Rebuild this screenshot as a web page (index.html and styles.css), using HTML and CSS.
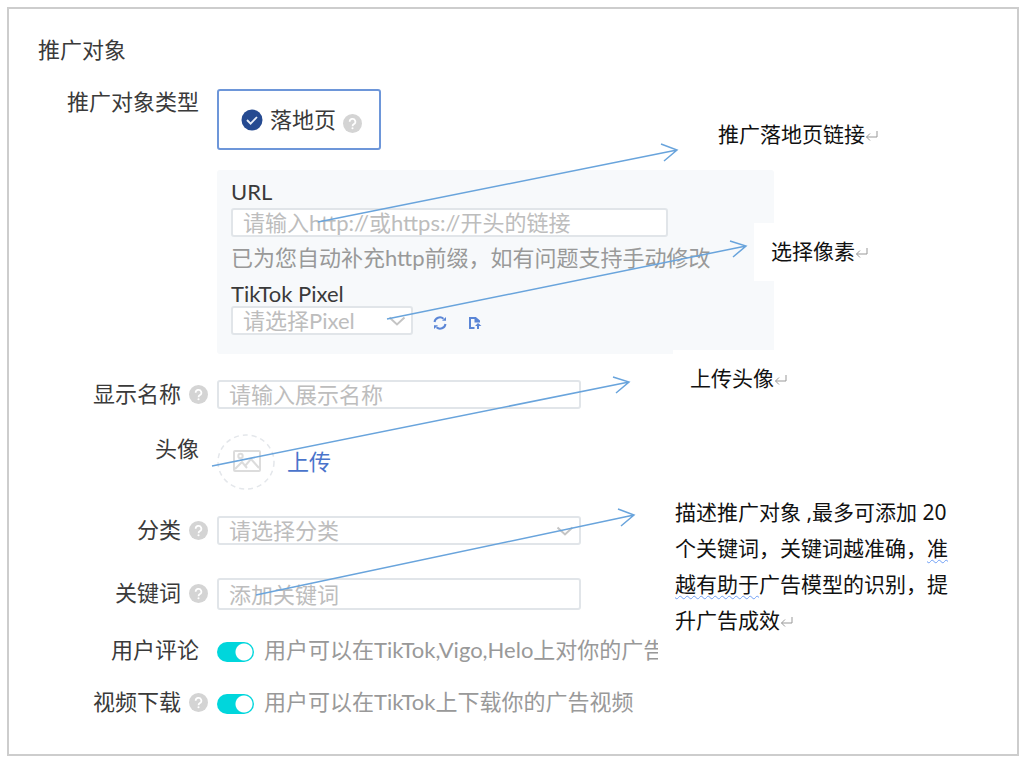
FILE: index.html
```html
<!DOCTYPE html>
<html lang="zh-CN">
<head>
<meta charset="utf-8">
<title>推广对象</title>
<link rel="stylesheet" href="styles.css">
</head>
<body>
<svg class="sprite" aria-hidden="true">
  <symbol id="help" viewBox="0 0 20 20"><circle cx="10" cy="10" r="10" fill="#d4d4d4"/><path d="M7 8.2a3 3 0 1 1 4.6 2.4c-1.1.7-1.6 1.2-1.6 2.2" fill="none" stroke="#fff" stroke-width="1.8"/><circle cx="10" cy="15" r="1.1" fill="#fff"/></symbol>
  <symbol id="chevron" viewBox="0 0 18 10"><path d="M1.5 1.5 9 8.5l7.500-7" fill="none" stroke="#c4c4c4" stroke-width="2"/></symbol>
  <symbol id="enter" viewBox="0 0 13 12"><path d="M12 1v6H1.500M5 3.500 1.500 7 5 10.500" fill="none" stroke="#999" stroke-width="1"/></symbol>
</svg>
<main class="board">
  <form class="form">
    <h1 class="title">推广对象</h1>

    <div class="row row-type">
      <span class="label">推广对象类型</span>
      <div class="stack">
        <button type="button" class="type-card">
          <svg class="check" viewBox="0 0 22 22"><circle cx="11" cy="11" r="10.500" fill="#254a91"/><path d="m6 11 3.600 3.700L16 8" fill="none" stroke="#e8eef8" stroke-width="1.800"/></svg>
          <span>落地页</span>
          <svg class="help help-card"><use href="#help"/></svg>
        </button>
        <div class="panel">
          <label class="panel-label" for="url">URL</label>
          <input class="field" id="url" type="text" placeholder="请输入http://或https://开头的链接">
          <p class="hint">已为您自动补充http前缀，如有问题支持手动修改</p>
          <label class="panel-label" for="pixel">TikTok Pixel</label>
          <div class="pixel-line">
            <div class="select-wrap pixel-select">
              <select class="field" id="pixel"><option>请选择Pixel</option></select>
              <svg class="chevron"><use href="#chevron"/></svg>
            </div>
            <button type="button" class="icon-button" aria-label="刷新">
              <svg viewBox="0 0 14 14" fill="none" stroke="#5b86d6" stroke-width="2"><path d="M1.500 6A5.500 5.500 0 0 1 10.500 2.700M12.500 8A5.500 5.500 0 0 1 3.500 11.300"/><path d="M9 4.800h4V1zM5 9.200H1V13z" fill="#5b86d6" stroke="none"/></svg>
            </button>
            <button type="button" class="icon-button" aria-label="新建">
              <svg viewBox="0 0 14 14" fill="none" stroke="#5b86d6" stroke-width="2"><path d="M6.500 12H2V2h5.500L11 5v1.500M7.500 2v3.500H11"/><path d="m10 7 3.500 3H11v3H9v-3H7z" fill="#5b86d6" stroke="none"/></svg>
            </button>
          </div>
        </div>
      </div>
    </div>

    <div class="row">
      <label class="label label-help" for="name">显示名称<svg class="help"><use href="#help"/></svg></label>
      <input class="field" id="name" type="text" placeholder="请输入展示名称">
    </div>

    <div class="row row-top">
      <span class="label">头像</span>
      <div class="avatar-line">
        <svg class="avatar" viewBox="0 0 58 56" fill="none"><ellipse cx="29" cy="28" rx="28" ry="27" stroke="#e4e7eb" stroke-width="1.500" stroke-dasharray="5 4"/><g stroke="#dcdcdc" stroke-width="2"><rect x="17" y="17" width="26" height="20" rx="1"/><circle cx="23.500" cy="22" r="2.200"/><path d="m18 35 7-7 5 6M28 32l6-7 8 9"/></g></svg>
        <a class="upload" href="#">上传</a>
      </div>
    </div>

    <div class="row">
      <label class="label label-help" for="category">分类<svg class="help"><use href="#help"/></svg></label>
      <div class="select-wrap">
        <select class="field" id="category"><option>请选择分类</option></select>
        <svg class="chevron"><use href="#chevron"/></svg>
      </div>
    </div>

    <div class="row row-top row-keyword">
      <label class="label label-help" for="keyword">关键词<svg class="help"><use href="#help"/></svg></label>
      <input class="field" id="keyword" type="text" placeholder="添加关键词">
    </div>

    <div class="row">
      <label class="label" for="comment">用户评论</label>
      <div class="switch-line"><input class="switch" id="comment" type="checkbox" checked><span>用户可以在TikTok,Vigo,Helo上对你的广告</span></div>
    </div>

    <div class="row row-last">
      <label class="label label-help" for="download">视频下载<svg class="help"><use href="#help"/></svg></label>
      <div class="switch-line"><input class="switch" id="download" type="checkbox" checked><span>用户可以在TikTok上下载你的广告视频</span></div>
    </div>
  </form>

  <p class="note note-url">推广落地页链接<svg class="enter"><use href="#enter"/></svg></p>
  <p class="note note-pixel">选择像素<svg class="enter"><use href="#enter"/></svg></p>
  <p class="note note-avatar">上传头像<svg class="enter"><use href="#enter"/></svg></p>
  <p class="note note-keyword">描述推广对象 ,最多可添加 20<br>个关键词，关键词越准确，<span class="wavy">准</span><br><span class="wavy">越有助于</span>广告模型的识别，提<br>升广告成效<svg class="enter"><use href="#enter"/></svg></p>

  <svg class="arrows" viewBox="0 0 700 620" fill="none" stroke="#69a4dc" stroke-width="1.500" aria-hidden="true">
    <path d="M318 222 677 150M661 144l16 6-13 11"/>
    <path d="M387 319 746 246M730 241l16 5-13 11"/>
    <path d="M212 466 629 382M613 377l16 5-13 11"/>
    <path d="M256 595 634 515M618 509l16 6-13 11"/>
  </svg>
</main>
</body>
</html>
```
FILE: styles.css
```css
* { box-sizing: border-box; }

body {
  margin: 0;
  background: #fff;
  color: #3a3a3a;
  font-family: Lato, "Noto Sans CJK SC", sans-serif;
  font-size: 22px;
  line-height: 30px;
}

button, input, select { font: inherit; color: inherit; }
svg { flex: none; }
.sprite { position: absolute; width: 0; height: 0; }

.board {
  position: relative;
  padding: 7px 8px 5px 7px;
}

.form {
  display: flex;
  flex-direction: column;
  gap: 25px;
  padding: 26px 29px 37px;
  border: 2px solid #cdcdcd;
}

.title {
  margin: 0;
  font-size: 22px;
  font-weight: 400;
}

.row {
  display: grid;
  grid-template-columns: 161px minmax(0, 1fr);
  column-gap: 18px;
  align-items: center;
}
.row-type { align-items: start; margin-top: -3px; }
.row-top { align-items: start; }
.row-keyword { margin-top: 8px; }
.row-last { margin-top: -3px; }

.label {
  display: flex;
  justify-content: flex-end;
  align-items: center;
  gap: 8px;
  white-space: nowrap;
}
.label-help { margin-right: -9px; }

.help { width: 19px; height: 19px; }

.stack {
  display: flex;
  flex-direction: column;
  align-items: flex-start;
  gap: 20px;
  padding-top: 2px;
}

.type-card {
  display: flex;
  align-items: center;
  gap: 7px;
  height: 61px;
  padding: 0 17px 0 22px;
  border: 2px solid #6d96d9;
  border-radius: 3px;
  background: #fff;
}
.check { width: 22px; height: 22px; }
.help-card { margin-top: 8px; }

.panel {
  display: flex;
  flex-direction: column;
  width: 100%;
  max-width: 557px;
  padding: 10px 14px 19px;
  border-radius: 3px;
  background: #f7f9fb;
  line-height: 24px;
}
.panel-label { align-self: flex-start; }
.panel #url { max-width: 437px; margin-top: 4px; }
.hint { margin: 9px 0 12px; color: #999; white-space: nowrap; }

.field {
  display: block;
  width: 100%;
  max-width: 364px;
  height: 29px;
  padding: 0 10px;
  border: 2px solid #e1e5e9;
  border-radius: 3px;
  background: #fff;
  line-height: 25px;
}
.field::placeholder { color: #bdbdbd; opacity: 1; }
#keyword { height: 32px; }

.select-wrap { position: relative; width: 100%; max-width: 364px; }
.select-wrap .field { appearance: none; color: #bdbdbd; }
.select-wrap .chevron {
  position: absolute;
  top: 10px;
  right: 7px;
  width: 18px;
  height: 10px;
  pointer-events: none;
}

.pixel-line { display: flex; align-items: center; }
.pixel-select { max-width: 182px; margin-right: 20px; }
.icon-button {
  display: flex;
  margin: 4px 21px 0 0;
  padding: 0;
  border: 0;
  background: none;
}
.icon-button svg { width: 14px; height: 14px; }

.avatar-line { display: flex; align-items: center; gap: 12px; }
.avatar { width: 58px; height: 56px; }
.upload { color: #4a74cb; text-decoration: none; }

.switch-line {
  display: flex;
  align-items: center;
  gap: 10px;
  color: #999;
  white-space: nowrap;
}
.switch {
  flex: none;
  width: 37px;
  height: 20px;
  margin: 4px 0 0;
  border-radius: 10px;
  appearance: none;
  background: radial-gradient(circle at 27px 10px, #fff 8px, #00d6dc 9px);
}

.note {
  position: absolute;
  margin: 0;
  padding: 10px 17px 12px;
  background: #fff;
  color: #111;
  font-family: "Noto Sans", "Noto Sans CJK SC", sans-serif;
  font-size: 21px;
  line-height: 36px;
  white-space: nowrap;
}
.note-url { left: 701px; top: 106px; }
.note-pixel { left: 754px; top: 223px; }
.note-avatar { left: 673px; top: 350px; }
.note-keyword { left: 658px; top: 484px; padding-bottom: 30px; }
.enter { width: 13px; height: 12px; }
.wavy { text-decoration: underline wavy #6f9ff5 1px; text-underline-offset: 3px; }

.arrows {
  position: absolute;
  left: 0;
  top: 0;
  width: 700px;
  height: 620px;
  overflow: visible;
  pointer-events: none;
}
```
